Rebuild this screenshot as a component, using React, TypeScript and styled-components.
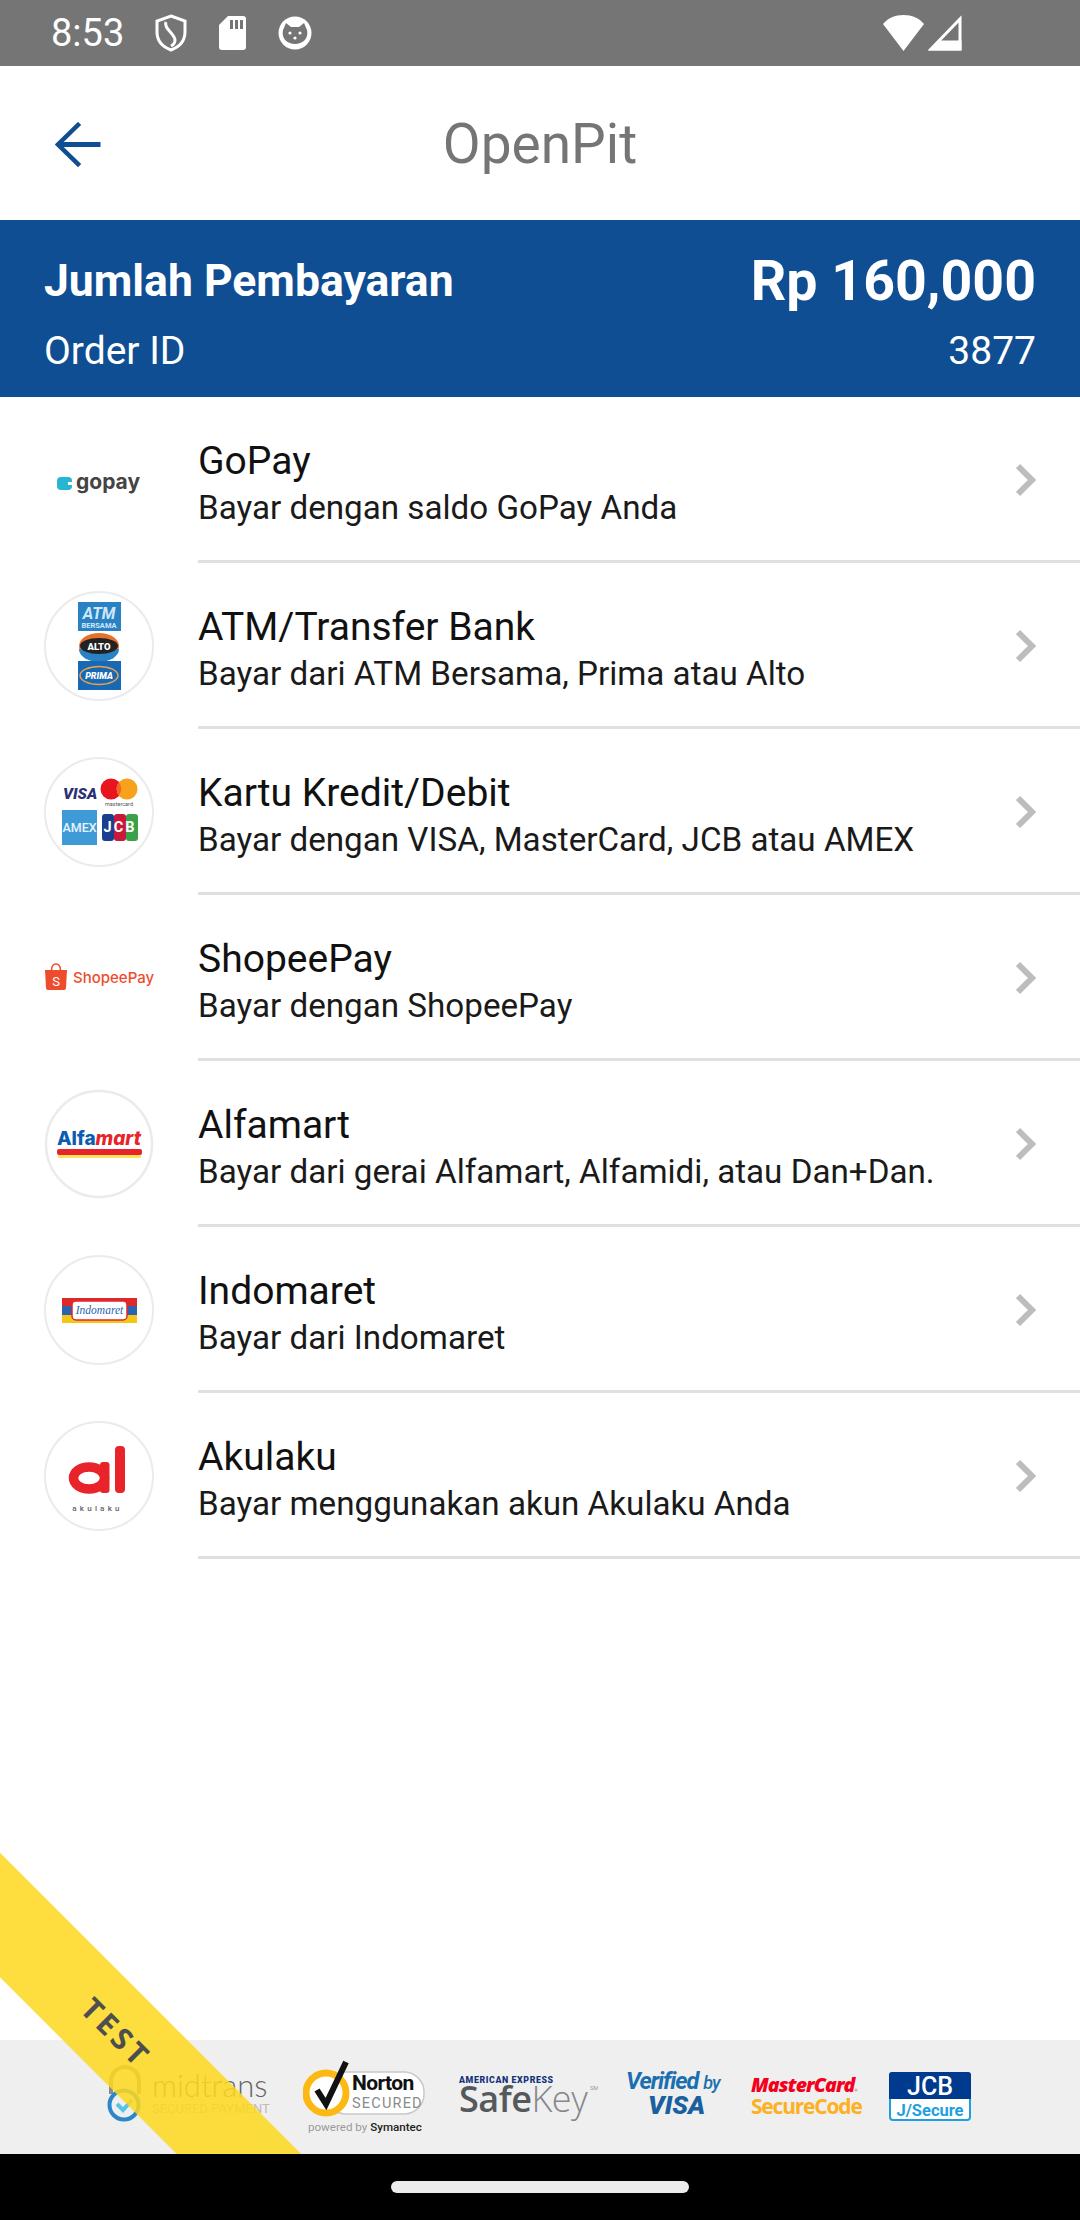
import { ReactNode } from 'react'
import styled, { createGlobalStyle } from 'styled-components'

const GlobalStyle = createGlobalStyle`
  html, body {
    margin: 0;
    padding: 0;
    background: #fff;
    font-family: Roboto, "Liberation Sans", sans-serif;
  }
`

const Screen = styled.div`
  width: 1080px;
  height: 2220px;
  display: flex;
  flex-direction: column;
  overflow: hidden;
`

const Main = styled.div`
  position: relative;
  flex: 1;
  display: flex;
  flex-direction: column;
  overflow: hidden;
`

const StatusBar = styled.div`
  height: 66px;
  flex: none;
  background: #757575;
  display: flex;
  align-items: center;
  padding: 0 118px 0 51px;
  color: #fff;
`

const Clock = styled.span`
  font-size: 38px;
  line-height: 66px;
  width: 104px;
`

const StatusIcons = styled.div`
  display: flex;
  align-items: center;
  gap: 32px;
`

const StatusRight = styled.div`
  margin-left: auto;
  display: flex;
  align-items: center;
  gap: 4px;
`

const Toolbar = styled.div`
  position: relative;
  height: 154px;
  flex: none;
  display: flex;
  align-items: center;
  justify-content: center;
  background: #fff;
`

const BackButton = styled.div`
  position: absolute;
  left: 55px;
  top: 56px;
  display: flex;
`

const Title = styled.div`
  font-size: 55px;
  color: #757575;
  padding-top: 2px;
`

const Summary = styled.div`
  height: 177px;
  flex: none;
  box-sizing: border-box;
  padding: 26px 44px 0 44px;
  background: #0f4e93;
  color: #fff;
  display: flex;
  flex-direction: column;
`

const SummaryRow = styled.div<{ $height: number }>`
  display: flex;
  align-items: center;
  justify-content: space-between;
  height: ${({ $height }) => $height}px;
`

const AmountLabel = styled.span`
  font-size: 44.5px;
  font-weight: 700;
`

const Amount = styled.span`
  font-size: 55.5px;
  font-weight: 700;
`

const OrderText = styled.span`
  font-size: 39px;
`

const Row = styled.div`
  height: 166px;
  flex: none;
  display: flex;
  align-items: center;
  padding-left: 44px;
`

const LogoBox = styled.div`
  width: 154px;
  flex: none;
  display: flex;
`

const RowBody = styled.div`
  flex: 1;
  height: 100%;
  box-sizing: border-box;
  border-bottom: 3px solid #e0e0e0;
  display: flex;
  align-items: center;
  justify-content: space-between;
  padding: 2px 43px 0 0;
`

const RowText = styled.div`
  display: flex;
  flex-direction: column;
  gap: 3px;
  margin-top: 9px;
`

const RowTitle = styled.div`
  font-size: 39px;
  line-height: 44px;
  color: #111;
`

const RowSubtitle = styled.div`
  font-size: 33.2px;
  line-height: 44px;
  color: #1a1a1a;
`

const Ribbon = styled.div`
  position: absolute;
  left: -183px;
  top: 1922px;
  width: 600px;
  height: 88px;
  transform: rotate(45deg);
  background: #fdd91f;
  opacity: 0.86;
  display: flex;
  align-items: center;
  justify-content: center;
  color: #333;
  font-family: "Open Sans", sans-serif;
  font-size: 30px;
  font-weight: 700;
  letter-spacing: 4px;
`

const Footer = styled.div`
  margin-top: auto;
  height: 114px;
  flex: none;
  background: #efefef;
  display: flex;
  gap: 27px;
  padding-left: 107px;
`

const NavBar = styled.div`
  height: 66px;
  flex: none;
  background: #000;
  display: flex;
  align-items: center;
  justify-content: center;
`

const HomePill = styled.div`
  width: 298px;
  height: 12px;
  border-radius: 6px;
  background: #ececec;
`

const ringProps = { fill: '#fff', stroke: '#ebebeb', strokeWidth: 2 }

const Logo = ({ children }: { children: ReactNode }) => (
  <svg width="110" height="110" viewBox="0 0 110 110">
    {children}
  </svg>
)

const GopayLogo = () => (
  <Logo>
    <rect x="13" y="52" width="15" height="13" rx="4" fill="#27b5d4" />
    <rect x="24" y="57" width="4" height="3" fill="#fff" />
    <text x="32" y="64" fontFamily="Inter" fontWeight="700" fontSize="21" fill="#444">
      gopay
    </text>
  </Logo>
)

const AtmLogo = () => (
  <Logo>
    <circle cx="55" cy="55" r="54" {...ringProps} />
    <rect x="34" y="11" width="43" height="29" fill="#2a82c4" />
    <text x="55" y="28" textAnchor="middle" fontFamily="Roboto" fontStyle="italic" fontWeight="700" fontSize="16" fill="#cfe8f8">
      ATM
    </text>
    <text x="55" y="37" textAnchor="middle" fontFamily="Roboto" fontWeight="700" fontSize="7.5" fill="#cfe8f8">
      BERSAMA
    </text>
    <ellipse cx="55" cy="55" rx="20" ry="13" fill="#e8702a" />
    <path d="M35 58 A20 13 0 0 0 75 58 Z" fill="#2a82c4" />
    <ellipse cx="55" cy="55" rx="19" ry="8" fill="#222" />
    <text x="55" y="58.5" textAnchor="middle" fontFamily="Roboto" fontWeight="900" fontSize="9.5" fill="#fff">
      ALTO
    </text>
    <rect x="34" y="70" width="43" height="29" fill="#1769b5" />
    <ellipse cx="55" cy="84.5" rx="19" ry="9" fill="none" stroke="#e8a04a" strokeWidth="1.5" />
    <text x="55" y="88" textAnchor="middle" fontFamily="Roboto" fontStyle="italic" fontWeight="900" fontSize="9" fill="#fff">
      PRIMA
    </text>
  </Logo>
)

const CardsLogo = () => (
  <Logo>
    <circle cx="55" cy="55" r="54" {...ringProps} />
    <text x="19" y="42" fontFamily="Roboto" fontStyle="italic" fontWeight="900" fontSize="15.5" fill="#2a2f78">
      VISA
    </text>
    <circle cx="67" cy="32" r="10.5" fill="#e8141e" />
    <circle cx="83" cy="32" r="10.5" fill="#f7a11c" />
    <path d="M75 25.5 a10.5 10.5 0 0 1 0 13 a10.5 10.5 0 0 1 0 -13 Z" fill="#f26522" />
    <text x="75" y="49" textAnchor="middle" fontFamily="Roboto" fontSize="5.5" fill="#555">
      mastercard
    </text>
    <rect x="18" y="53" width="35" height="35" fill="#3f9bd8" />
    <text x="35.5" y="75" textAnchor="middle" fontFamily="Roboto" fontWeight="500" fontSize="12.5" fill="#e8f4fb">
      AMEX
    </text>
    <rect x="58" y="57" width="12" height="27" rx="3" fill="#1a3f8c" />
    <rect x="70" y="57" width="12" height="27" rx="3" fill="#c9193a" />
    <rect x="82" y="57" width="12" height="27" rx="3" fill="#3aa14b" />
    <text x="76" y="75" textAnchor="middle" fontFamily="Roboto" fontWeight="700" fontSize="14.5" letterSpacing="2" fill="#fff">
      JCB
    </text>
  </Logo>
)

const ShopeeLogo = () => (
  <Logo>
    <path d="M1 47 H23 L22 65 Q22 67 20 67 H4 Q2 67 2 65 Z" fill="#ee4d2d" />
    <path d="M7.5 47 C8 39 16 39 16.5 47" fill="none" stroke="#ee4d2d" strokeWidth="1.5" />
    <text x="12" y="63" textAnchor="middle" fontFamily="Roboto" fontSize="13" fill="#fff">
      S
    </text>
    <text x="29" y="60" fontFamily="Inter" fontWeight="500" fontSize="15" fill="#ee4d2d">
      ShopeePay
    </text>
  </Logo>
)

const AlfamartLogo = () => (
  <Logo>
    <circle cx="55" cy="55" r="53" {...ringProps} strokeWidth="2.5" />
    <text x="13" y="56" fontFamily="Inter" fontWeight="800" fontSize="19" fill="#0c5cb0">
      Alfa
      <tspan fill="#e8232a" fontStyle="italic">mart</tspan>
    </text>
    <rect x="13" y="60" width="85" height="6" rx="2" fill="#e8232a" />
    <rect x="14" y="66" width="83" height="3" rx="1" fill="#fde25a" />
  </Logo>
)

const IndomaretLogo = () => (
  <Logo>
    <circle cx="55" cy="55" r="54" {...ringProps} />
    <rect x="18" y="43" width="75" height="8" fill="#e0272c" />
    <rect x="18" y="51" width="75" height="9" fill="#2a63b0" />
    <rect x="18" y="60" width="75" height="8" fill="#f5c518" />
    <rect x="28" y="46" width="55" height="19" rx="4" fill="#fff" stroke="#e0272c" strokeWidth="1.5" />
    <text x="55.5" y="59" textAnchor="middle" fontFamily="Liberation Serif" fontStyle="italic" fontSize="11.5" fill="#2a63b0">
      Indomaret
    </text>
  </Logo>
)

const AkulakuLogo = () => (
  <Logo>
    <circle cx="55" cy="55" r="54" {...ringProps} />
    <ellipse cx="45" cy="57" rx="15.5" ry="11" fill="none" stroke="#e8232a" strokeWidth="9.5" />
    <rect x="56" y="41" width="9.5" height="31" rx="3" fill="#e8232a" />
    <rect x="71" y="25" width="10" height="47" rx="4" fill="#e8232a" />
    <text x="53.5" y="90" textAnchor="middle" fontFamily="Roboto" fontWeight="500" fontSize="8" letterSpacing="3.2" fill="#666">
      akulaku
    </text>
  </Logo>
)

const MidtransLogo = () => (
  <svg width="169" height="114" viewBox="0 0 169 114">
    <path d="M4 54 V42 C4 22 32 22 32 42 V54" fill="none" stroke="#8b8b8b" strokeWidth="4" />
    <circle cx="17" cy="65" r="14.5" fill="none" stroke="#2b86cc" strokeWidth="4" />
    <path d="M10 64 L16 70 L25 60" fill="none" stroke="#59c3e8" strokeWidth="4" />
    <text x="45" y="57" fontFamily="Lato" fontWeight="300" fontSize="31" fill="#666">
      midtrans
    </text>
    <text x="45" y="73" fontFamily="Roboto" fontSize="13" fill="#bbb">
      SECURED PAYMENT
    </text>
  </svg>
)

const NortonLogo = () => (
  <svg width="129" height="114" viewBox="0 0 129 114">
    <rect x="23" y="32" width="98" height="42" rx="20" fill="#fff" stroke="#c9c9c9" strokeWidth="1.5" />
    <circle cx="23" cy="53" r="20" fill="#fff" stroke="#fdb913" strokeWidth="7" />
    <path d="M14 50 L23 64 L43 22" fill="none" stroke="#111" strokeWidth="6" />
    <text x="49" y="50" fontFamily="Roboto" fontWeight="700" fontSize="21" letterSpacing="-0.6" fill="#111">
      Norton
    </text>
    <text x="49" y="68" fontFamily="Roboto" fontSize="14.5" letterSpacing="1.2" fill="#8a8a8a">
      SECURED
    </text>
    <text x="5" y="91" fontFamily="Roboto" fontSize="11.6" fill="#9a9a9a">
      powered by <tspan fill="#222" fontWeight="500">Symantec</tspan>
    </text>
  </svg>
)

const SafeKeyLogo = () => (
  <svg width="139" height="114" viewBox="0 0 139 114">
    <text x="0" y="43" fontFamily="Roboto" fontWeight="900" fontSize="8.8" letterSpacing="0.6" fill="#14337a">
      AMERICAN EXPRESS
    </text>
    <text x="0" y="72" fontFamily="Open Sans" fontSize="36" letterSpacing="-0.5" fill="#55585c" fontWeight="600">
      Safe<tspan fontWeight="300" fill="#85888b">Key</tspan>
    </text>
    <text x="131" y="50" fontFamily="Roboto" fontSize="6" fill="#999">
      SM
    </text>
  </svg>
)

const VerifiedLogo = () => (
  <svg width="99" height="114" viewBox="0 0 99 114">
    <text x="1" y="49" fontFamily="Roboto" fontStyle="italic" fontWeight="700" fontSize="23.5" letterSpacing="-1" fill="#1a6fb0">
      Verified <tspan fontWeight="500" fontSize="18">by</tspan>
    </text>
    <text x="23" y="74" fontFamily="Roboto" fontStyle="italic" fontWeight="900" fontSize="26" fill="#18609f">
      VISA
    </text>
  </svg>
)

const MasterCardLogo = () => (
  <svg width="111" height="114" viewBox="0 0 111 114">
    <text x="0" y="52" fontFamily="Open Sans" fontStyle="italic" fontWeight="800" fontSize="19.5" letterSpacing="-0.9" fill="#f4001c">
      MasterCard
    </text>
    <circle cx="105" cy="50" r="1.5" fill="#f4a0a0" />
    <text x="0" y="74" fontFamily="Open Sans" fontWeight="700" fontSize="21" letterSpacing="-1.2" fill="#fcb022">
      SecureCode
    </text>
  </svg>
)

const JcbLogo = () => (
  <svg width="82" height="114" viewBox="0 0 82 114">
    <rect x="1" y="33" width="80" height="47" rx="3" fill="#fff" stroke="#1ea0e0" strokeWidth="2" />
    <path d="M0 35 a3 3 0 0 1 3 -3 H79 a3 3 0 0 1 3 3 V59 H0 Z" fill="#003a8f" />
    <text x="41" y="55" textAnchor="middle" fontFamily="Roboto" fontWeight="500" fontSize="25" fill="#fff">
      JCB
    </text>
    <text x="41" y="76" textAnchor="middle" fontFamily="Roboto" fontWeight="700" fontSize="16.5" fill="#1ea0e0">
      J/Secure
    </text>
  </svg>
)

const methods = [
  { title: 'GoPay', subtitle: 'Bayar dengan saldo GoPay Anda', logo: <GopayLogo /> },
  { title: 'ATM/Transfer Bank', subtitle: 'Bayar dari ATM Bersama, Prima atau Alto', logo: <AtmLogo /> },
  { title: 'Kartu Kredit/Debit', subtitle: 'Bayar dengan VISA, MasterCard, JCB atau AMEX', logo: <CardsLogo /> },
  { title: 'ShopeePay', subtitle: 'Bayar dengan ShopeePay', logo: <ShopeeLogo /> },
  { title: 'Alfamart', subtitle: 'Bayar dari gerai Alfamart, Alfamidi, atau Dan+Dan.', logo: <AlfamartLogo /> },
  { title: 'Indomaret', subtitle: 'Bayar dari Indomaret', logo: <IndomaretLogo /> },
  { title: 'Akulaku', subtitle: 'Bayar menggunakan akun Akulaku Anda', logo: <AkulakuLogo /> },
]

export default function App() {
  return (
    <Screen>
      <GlobalStyle />
      <StatusBar>
        <Clock>8:53</Clock>
        <StatusIcons>
          <svg width="32" height="38" viewBox="0 0 32 38" fill="none" stroke="#fff" strokeWidth="3">
            <path d="M16 2 L30 7 V18 C30 27 24 33 16 36 C8 33 2 27 2 18 V7 Z" />
            <path d="M11 8 C8 14 20 20 20 26 C20 29 18 31 16 32" />
          </svg>
          <svg width="27" height="36" viewBox="0 0 27 36" fill="#fff">
            <path d="M9 1 H24 Q27 1 27 4 V32 Q27 35 24 35 H3 Q0 35 0 32 V10 Z" />
            <path d="M11 5 h3 v9 h-3 Z M16 5 h3 v9 h-3 Z M21 5 h3 v9 h-3 Z" fill="#757575" />
          </svg>
          <svg width="34" height="36" viewBox="0 0 34 36">
            <circle cx="17" cy="18" r="16.5" fill="#fff" />
            <path d="M5 15 L8 8 L13 12 H21 L26 8 L29 15 C31 24 24 29 17 29 C10 29 3 24 5 15 Z" fill="#757575" />
            <circle cx="12" cy="18" r="1.6" fill="#fff" />
            <circle cx="22" cy="18" r="1.6" fill="#fff" />
            <circle cx="17" cy="23" r="1.6" fill="#fff" />
          </svg>
        </StatusIcons>
        <StatusRight>
          <svg width="41" height="36" viewBox="0 0 41 36" fill="#fff">
            <path d="M20.5 36 L0 9 C5 3 12 0 20.5 0 C29 0 36 3 41 9 Z" />
          </svg>
          <svg width="34" height="36" viewBox="0 0 34 36" fill="none" stroke="#fff" strokeWidth="3">
            <path d="M32 4 V34 H3 Z" />
            <path d="M4 34 H32 V27 H11 Z" fill="#fff" />
          </svg>
        </StatusRight>
      </StatusBar>
      <Main>
        <Toolbar>
          <BackButton>
            <svg width="46" height="46" viewBox="0 0 46 46" fill="none" stroke="#0f4e93" strokeLinecap="square">
              <path d="M23 3 L3 22.5 L23 42" strokeWidth="4.5" />
              <path d="M6 22.5 H43" strokeWidth="5" />
            </svg>
          </BackButton>
          <Title>OpenPit</Title>
        </Toolbar>
        <Summary>
          <SummaryRow $height={70}>
            <AmountLabel>Jumlah Pembayaran</AmountLabel>
            <Amount>Rp 160,000</Amount>
          </SummaryRow>
          <SummaryRow $height={70}>
            <OrderText>Order ID</OrderText>
            <OrderText>3877</OrderText>
          </SummaryRow>
        </Summary>
        {methods.map((method) => (
          <Row key={method.title}>
            <LogoBox>{method.logo}</LogoBox>
            <RowBody>
              <RowText>
                <RowTitle>{method.title}</RowTitle>
                <RowSubtitle>{method.subtitle}</RowSubtitle>
              </RowText>
              <svg width="22" height="34" viewBox="0 0 22 34" fill="none" stroke="#bdbdbd" strokeWidth="6">
                <path d="M3 3 L17 17 L3 31" />
              </svg>
            </RowBody>
          </Row>
        ))}
        <Footer>
          <MidtransLogo />
          <NortonLogo />
          <SafeKeyLogo />
          <VerifiedLogo />
          <MasterCardLogo />
          <JcbLogo />
        </Footer>
        <Ribbon>TEST</Ribbon>
      </Main>
      <NavBar>
        <HomePill />
      </NavBar>
    </Screen>
  )
}
